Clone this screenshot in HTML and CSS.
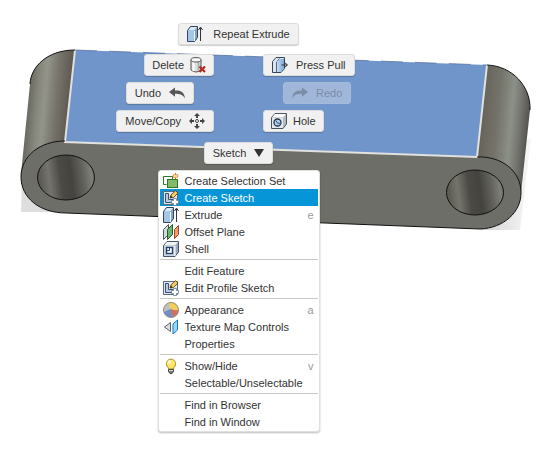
FILE: index.html
```html
<!DOCTYPE html>
<html lang="en">
<head>
<meta charset="utf-8">
<title>Marking menu</title>
<link rel="stylesheet" href="styles.css">
</head>
<body>
<svg width="0" height="0" class="defs" aria-hidden="true">
  <defs>
    <linearGradient id="blue" x1="0" x2="1"><stop stop-color="#c9def2"/><stop offset="1" stop-color="#79a8d8"/></linearGradient>
    <symbol id="extrude" viewBox="0 0 16 16"><path d="M.5 4.500L3.500 .5H10.500V11.500L7.500 15.500H.5Z" fill="#7fa5cf" stroke="#35435f"/><path d="M1 5H7V15H1Z" fill="#a3c6ea"/><path d="M1.200 4.500L4 1H10L7.200 4.500Z" fill="#dcebf8"/><path d="M7.500 5V15" stroke="#f4f9ff"/><path d="M13.500 15V2M11.500 4L13.500 1L15.500 4" fill="none" stroke="#333"/></symbol>
    <symbol id="selset" viewBox="0 0 16 16"><path d="M3.500 11.500H.5V3.500H9.500V6" fill="none" stroke="#287a26"/><rect x="4.500" y="6.500" width="10" height="8" fill="#83bb67" stroke="#287a26"/><path d="M12.500 0V6M9.500 3H15.500M10.500 1L14.500 5M14.500 1L10.500 5" stroke="#d9531e"/><circle cx="12.500" cy="3" r="1.500" fill="#ffe37a"/></symbol>
    <symbol id="sketch" viewBox="0 0 16 16"><path d="M.5 1.500H14.500V14.500H.5Z" fill="#dfe8f1" stroke="#596a80"/><path d="M2.500 3.500H5.500V9.500H10.500V12.500H2.500Z" fill="#b9c9de" stroke="#3c5275"/><path d="M7 8L8 5L12.500 .7L15 3L10.500 7.500Z" fill="#f7cd62" stroke="#4a3412" stroke-width=".8"/><path d="M7 8L8 5.500L9.500 7.200Z" fill="#222"/><path d="M10.500 8.500H13.500V10.500H15.500V13.500H13.500V15.500H10.500V13.500H8.500V10.500H10.500Z" fill="#fff" stroke="#667b96" stroke-width=".8"/></symbol>
    <symbol id="offset" viewBox="0 0 16 16"><path d="M.5 5.500L5.500 .5V10.500L.5 15.500Z" fill="#d3d8de" stroke="#555"/><path d="M4.500 5.500L9.500 .5V10.500L4.500 15.500Z" fill="#6eb573" stroke="#205f2b"/><path d="M11.500 5.500L15.500 1.500V10.500L11.500 14.500Z" fill="#f09a73" stroke="#a94124"/></symbol>
    <symbol id="shell" viewBox="0 0 16 16"><path d="M.5 4.500L4 .5H15.500V11L12 15.500H.5Z" fill="#9da9b8" stroke="#43536c"/><path d="M1 4.500L4 1H15L12 4.500Z" fill="#f1f4f7"/><path d="M1 5H12V15H1Z" fill="#cbd5e0"/><path d="M12 5V15" stroke="#fff"/><rect x="3.500" y="6.500" width="6" height="6" fill="#fff" stroke="#24416e" stroke-width="1.400"/><path d="M6.500 7V9.500H4" fill="none" stroke="#24416e"/></symbol>
    <symbol id="pull" viewBox="0 0 16 16"><path d="M.5 4.500L4 .5H12.500V11.500L9 15.500H.5Z" fill="#dce4ed" stroke="#36445b"/><path d="M5 5L8 2H12V11L9 15H5Z" fill="url(#blue)"/><path d="M4.500 5V15M5 4.500L7.500 1.500" stroke="#536884"/><path d="M9.500 8H15M12.500 5.500L15.500 8L12.500 10.500" fill="none" stroke="#333"/></symbol>
    <symbol id="hole" viewBox="0 0 16 16"><path d="M.5 4.500L4 .5H15.500V11L12 15.500H.5Z" fill="#b3bac3" stroke="#4a5360"/><path d="M1 4.500L4 1H15L12 4.500Z" fill="#fafafa"/><path d="M1 5H12V15H1Z" fill="#e4e7eb"/><circle cx="6.500" cy="9.500" r="3.500" fill="#b9d3ec" stroke="#24364f" stroke-width="1.300"/><path d="M5 7.500Q5 10.500 9 10.500" fill="none" stroke="#2d5584"/></symbol>
    <symbol id="delete" viewBox="0 0 16 16"><path d="M1 3V13Q6 17 11 13V3" fill="#dedede" stroke="#555"/><path d="M3.500 5V14" stroke="#fff" stroke-width="2"/><path d="M8.500 5V14" stroke="#aaa" stroke-width="1.500"/><ellipse cx="6" cy="2.800" rx="5" ry="2.200" fill="#f8f8f8" stroke="#555"/><path d="M9.500 9.500L15 15M15 9.500L9.500 15" stroke="#b52820" stroke-width="2.200"/></symbol>
    <symbol id="undo" viewBox="0 0 16 16"><path d="M0 7L6 2.500V5.500C12 5 15.500 7.500 16 13.500C13.500 9.500 11 8.800 6 8.800V11.800Z" fill="currentColor"/></symbol>
    <symbol id="move" viewBox="0 0 16 16"><path d="M8 0L11 3H9V5H7V3H5ZM8 16L5 13H7V11H9V13H11ZM0 8L3 5V7H5V9H3V11ZM16 8L13 11V9H11V7H13V5Z" fill="#444"/><circle cx="8" cy="8" r="1.500" fill="#fff" stroke="#444"/></symbol>
    <symbol id="appearance" viewBox="0 0 16 16"><circle cx="8" cy="8" r="7.500" fill="#7f9fd2"/><path d="M8 .5A7.500 7.500 0 0 0 1 10L7 9.500L9 4Z" fill="#bfc0c4"/><path d="M5 1.200A7.500 7.500 0 0 1 15.500 8Q11 9 8 7Z" fill="#f0cf55"/><path d="M8 7Q11 9 15.500 8A7.500 7.500 0 0 1 11 15Q7.500 12 8 7Z" fill="#d6705e"/><path d="M1 10L8 7Q7 12 11 15A7.500 7.500 0 0 1 1 10Z" fill="#6f8cc7"/><circle cx="8" cy="8" r="7.500" fill="none" stroke="#9a8c85"/></symbol>
    <symbol id="texture" viewBox="0 0 16 16"><path d="M1.500 8L7.500 3.500V12.500Z" fill="#d9dee3" stroke="#59636d"/><path d="M10 5L14.500 1V11L10 15Z" fill="#9ad8fa" stroke="#157bb6"/></symbol>
    <symbol id="bulb" viewBox="0 0 16 16"><path d="M5.500 11Q5.500 9.500 4 8A4.600 4.600 0 1 1 12 8Q10.500 9.500 10.500 11Z" fill="#ffe866" stroke="#a58d27"/><circle cx="6.500" cy="4" r="1.700" fill="#fffce0"/><path d="M5.500 11.500H10.500V13.500L9 15.500H7L5.500 13.500Z" fill="#777" stroke="#444"/><path d="M6 12.500H10" stroke="#ddd"/></symbol>
  </defs>
</svg>

<main class="viewport">
  <svg class="model" viewBox="0 0 554 459" aria-hidden="true">
    <defs>
      <linearGradient id="left" gradientUnits="userSpaceOnUse" x1="26" y1="100" x2="72" y2="104"><stop stop-color="#64635d"/><stop offset=".24" stop-color="#85857b"/><stop offset=".4" stop-color="#92948a"/><stop offset=".65" stop-color="#77746b"/><stop offset="1" stop-color="#59534b"/></linearGradient>
      <linearGradient id="right" gradientUnits="userSpaceOnUse" x1="482" y1="110" x2="528" y2="114"><stop stop-color="#67635a"/><stop offset=".35" stop-color="#74736a"/><stop offset=".65" stop-color="#8c9188"/><stop offset=".85" stop-color="#73736d"/><stop offset="1" stop-color="#595853"/></linearGradient>
      <linearGradient id="bore" x1="0" y1=".1" x2="1" y2="0"><stop stop-color="#5c5c55"/><stop offset=".16" stop-color="#74746c"/><stop offset=".36" stop-color="#4c4a45"/><stop offset=".55" stop-color="#45433f"/><stop offset=".75" stop-color="#62625c"/><stop offset=".9" stop-color="#7c7f77"/><stop offset="1" stop-color="#66665f"/></linearGradient>
      <linearGradient id="shade"><stop stop-color="#d2d2d2"/><stop offset="1" stop-color="#f7f7f7"/></linearGradient>
    </defs>
    <path d="M22 180L21 212H60Z" fill="#dedede"/>
    <path d="M526 139H531L520 230H480L518 202Z" fill="url(#shade)"/>
    <path d="M75 50C48 50 31 66 30 84L21 174C23 155 42 142 65 141Z" fill="url(#left)"/>
    <path d="M487 65C512 66 531 86 530 110L521 193C520 171 502 157 477 157Z" fill="url(#right)"/>
    <path d="M65 141C40 141 21 156 21 177C21 198 40 213 66 213L480 229C504 228 521 212 521 193C521 171 502 156 477 157Z" fill="#6e6e68"/>
    <path d="M75 50L487 65L477 157L65 142Z" fill="#7095ca"/>
    <path d="M75 50L65 142L477 157L487 65" fill="none" stroke="#e1e2df" stroke-width="2"/>
    <path d="M65 141C40 141 21 156 21 177C21 198 40 213 66 213L480 229C504 228 521 212 521 193C521 171 502 156 477 157M75 50C48 50 31 66 30 84M487 65C512 66 531 86 530 110" fill="none" stroke="#111"/>
    <path d="M75 50L487 65" stroke="#4f6a99" stroke-width=".7" stroke-dasharray="22 12"/>
    <ellipse cx="66" cy="177.500" rx="28.500" ry="22.500" fill="url(#bore)" stroke="#111"/>
    <ellipse cx="475" cy="192.500" rx="28.500" ry="22.500" fill="url(#bore)" stroke="#111"/>
  </svg>

  <div class="marking">
    <button class="cmd center repeat"><svg class="icon"><use href="#extrude"/></svg>Repeat Extrude</button>
    <div class="wheel">
      <button class="cmd west compact">Delete<svg class="icon"><use href="#delete"/></svg></button>
      <button class="cmd"><svg class="icon"><use href="#pull"/></svg>Press Pull</button>
      <button class="cmd west inset-west">Undo<svg class="icon arrow"><use href="#undo"/></svg></button>
      <button class="cmd inset-east" disabled><svg class="icon flip"><use href="#undo"/></svg>Redo</button>
      <button class="cmd west">Move/Copy<svg class="icon"><use href="#move"/></svg></button>
      <button class="cmd compact"><svg class="icon"><use href="#hole"/></svg>Hole</button>
    </div>
    <button class="cmd center">Sketch<svg class="caret" viewBox="0 0 10 8"><path d="M0 0H10L5 8Z" fill="#333"/></svg></button>

    <div class="menu" role="menu">
      <button class="item" role="menuitem"><svg class="icon"><use href="#selset"/></svg><span>Create Selection Set</span></button>
      <button class="item active" role="menuitem"><svg class="icon"><use href="#sketch"/></svg><span>Create Sketch</span></button>
      <button class="item" role="menuitem"><svg class="icon"><use href="#extrude"/></svg><span>Extrude</span><kbd>e</kbd></button>
      <button class="item" role="menuitem"><svg class="icon"><use href="#offset"/></svg><span>Offset Plane</span></button>
      <button class="item" role="menuitem"><svg class="icon"><use href="#shell"/></svg><span>Shell</span></button>
      <hr>
      <button class="item" role="menuitem"><i class="icon"></i><span>Edit Feature</span></button>
      <button class="item" role="menuitem"><svg class="icon"><use href="#sketch"/></svg><span>Edit Profile Sketch</span></button>
      <hr>
      <button class="item" role="menuitem"><svg class="icon"><use href="#appearance"/></svg><span>Appearance</span><kbd>a</kbd></button>
      <button class="item" role="menuitem"><svg class="icon"><use href="#texture"/></svg><span>Texture Map Controls</span></button>
      <button class="item" role="menuitem"><i class="icon"></i><span>Properties</span></button>
      <hr>
      <button class="item" role="menuitem"><svg class="icon"><use href="#bulb"/></svg><span>Show/Hide</span><kbd>v</kbd></button>
      <button class="item" role="menuitem"><i class="icon"></i><span>Selectable/Unselectable</span></button>
      <hr>
      <button class="item" role="menuitem"><i class="icon"></i><span>Find in Browser</span></button>
      <button class="item" role="menuitem"><i class="icon"></i><span>Find in Window</span></button>
    </div>
  </div>
</main>
</body>
</html>
```

FILE: styles.css
```css
* { box-sizing: border-box; }

body {
  margin: 0;
  background: #fff;
  color: #333;
  font: 11px/16px "Liberation Sans", Arial, sans-serif;
}

.defs { position: absolute; }

.viewport { position: relative; }

.model { display: block; width: 100%; }

/* The marking menu floats over the model where it was summoned. */
.marking {
  position: absolute;
  top: 23px;
  left: 114px;
  display: flex;
  flex-direction: column;
  align-items: center;
}

button {
  font: inherit;
  color: inherit;
  text-align: left;
}

.icon {
  flex: none;
  width: 16px;
  height: 16px;
}

.arrow { color: #555; }

.flip { transform: scaleX(-1); }

.cmd {
  display: flex;
  align-items: center;
  gap: 8px;
  height: 22px;
  padding: 0 8px;
  border: 1px solid #dcdcdc;
  border-radius: 3px;
  background: #f1f1f1;
  box-shadow: 0 1px 1px #0003;
  white-space: nowrap;
}

.compact { gap: 6px; padding: 0 7px; }

.repeat { gap: 10px; margin-bottom: 9px; }

.wheel {
  display: grid;
  grid-template-columns: 100px 100px;
  justify-items: start;
  gap: 6px 49px;
  margin-bottom: 10px;
}

.west { justify-self: end; }
.inset-west { margin-right: 20px; }
.inset-east { margin-left: 20px; }

.cmd:disabled {
  border-color: #a4badb;
  background: #a1b7da;
  box-shadow: none;
  color: #7c8ba6;
}

.caret { width: 10px; height: 8px; }

.menu {
  width: 162px;
  margin-top: 6px;
  padding: 1px;
  border: 1px solid #e0e0e0;
  border-radius: 3px;
  background: #fff;
  box-shadow: 0 1px 2px #0004;
}

.item {
  display: flex;
  align-items: center;
  gap: 6px;
  width: 100%;
  height: 17px;
  padding: 0 4px 0 3px;
  border: 0;
  background: none;
  white-space: nowrap;
}

.item.active { background: #0696d7; color: #fff; }

kbd {
  margin-left: auto;
  color: #999;
  font: inherit;
}

hr {
  height: 1px;
  margin: 2px 0;
  border: 0;
  background: #c8c8c8;
}
```
